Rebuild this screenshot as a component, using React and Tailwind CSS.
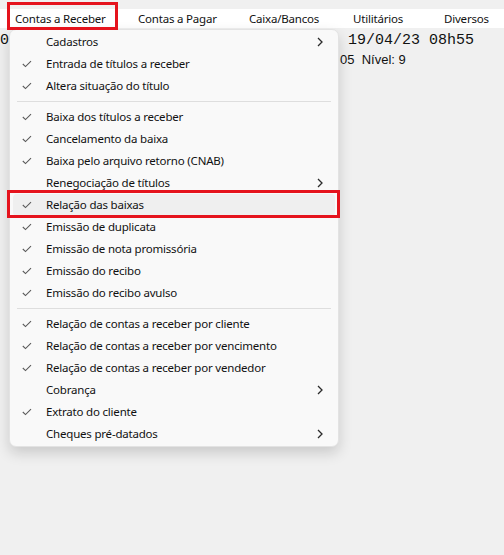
import React from "react";

const Check = () => (
  <svg width="10" height="8" viewBox="0 0 10 8" className="block">
    <polyline points="0.8,4 3.5,6.6 9,1.2" fill="none" stroke="#5a5a5a" strokeWidth="1.1" />
  </svg>
);

const Chevron = () => (
  <svg width="6" height="10" viewBox="0 0 6 10" className="block">
    <polyline points="1,1 5,5 1,9" fill="none" stroke="#2b2b2b" strokeWidth="1.3" />
  </svg>
);

const items = [
  { t: "Cadastros", c: false, s: true },
  { t: "Entrada de títulos a receber", c: true },
  { t: "Altera situação do título", c: true },
  { sep: true },
  { t: "Baixa dos títulos a receber", c: true },
  { t: "Cancelamento da baixa", c: true },
  { t: "Baixa pelo arquivo retorno (CNAB)", c: true },
  { t: "Renegociação de títulos", c: false, s: true },
  { t: "Relação das baixas", c: true, h: true },
  { t: "Emissão de duplicata", c: true },
  { t: "Emissão de nota promissória", c: true },
  { t: "Emissão do recibo", c: true },
  { t: "Emissão do recibo avulso", c: true },
  { sep: true },
  { t: "Relação de contas a receber por cliente", c: true },
  { t: "Relação de contas a receber por vencimento", c: true },
  { t: "Relação de contas a receber por vendedor", c: true },
  { t: "Cobrança", c: false, s: true },
  { t: "Extrato do cliente", c: true },
  { t: "Cheques pré-datados", c: false, s: true },
];

export default function App() {
  return (
    <div className="relative w-[504px] h-[555px] overflow-hidden bg-[#f0f0f0] text-black font-['Noto_Sans',sans-serif]">
      <div className="h-[9px]" />
      <nav className="flex h-[19px] items-center bg-white text-[11.5px] tracking-[-0.2px] leading-none text-[#111]">
        <div className="w-[138px] pl-[15px]">Contas a Receber</div>
        <div className="w-[111px]">Contas a Pagar</div>
        <div className="w-[104px]">Caixa/Bancos</div>
        <div className="w-[91px]">Utilitários</div>
        <div>Diversos</div>
      </nav>
      <div className="pt-[2px] text-[#111]">
        <div className="flex h-[20px] items-center font-['Liberation_Mono',monospace] text-[15px] leading-none">
          <span className="w-[348px]">0</span>
          <span className="whitespace-pre">19/04/23 08h55</span>
        </div>
        <div className="flex h-[19px] items-center font-['Liberation_Sans',sans-serif] text-[13px] leading-none">
          <span className="pl-[340px] whitespace-pre">05  Nível: 9</span>
        </div>
      </div>

      <div className="absolute left-[9px] top-[29px] w-[330px] rounded-[7px] border border-[#e3e3e3] bg-[#f9f9f9] py-[1px] shadow-[0_6px_14px_rgba(0,0,0,0.16)] text-[11.5px] tracking-[-0.2px] text-[#111]">
        {items.map((it, i) =>
          it.sep ? (
            <div key={i} className="flex h-[9px] items-center px-[7px]">
              <div className="h-px w-full bg-[#dedede]" />
            </div>
          ) : (
            <div
              key={i}
              className={
                "mx-[3px] flex h-[22px] items-center rounded-[4px] pl-[9px] pr-[12px] " +
                (it.h ? "bg-[#efefef]" : "")
              }
            >
              <div className="w-[24px]">{it.c ? <Check /> : null}</div>
              <div className="flex-1 leading-none">{it.t}</div>
              {it.s ? <Chevron /> : null}
            </div>
          )
        )}
      </div>

      <div className="pointer-events-none absolute left-[7px] top-[2px] h-[28px] w-[111px] border-[3px] border-[#e5131d]" />
      <div className="pointer-events-none absolute left-[7px] top-[190px] h-[28px] w-[333px] border-[3px] border-[#e5131d]" />
    </div>
  );
}
